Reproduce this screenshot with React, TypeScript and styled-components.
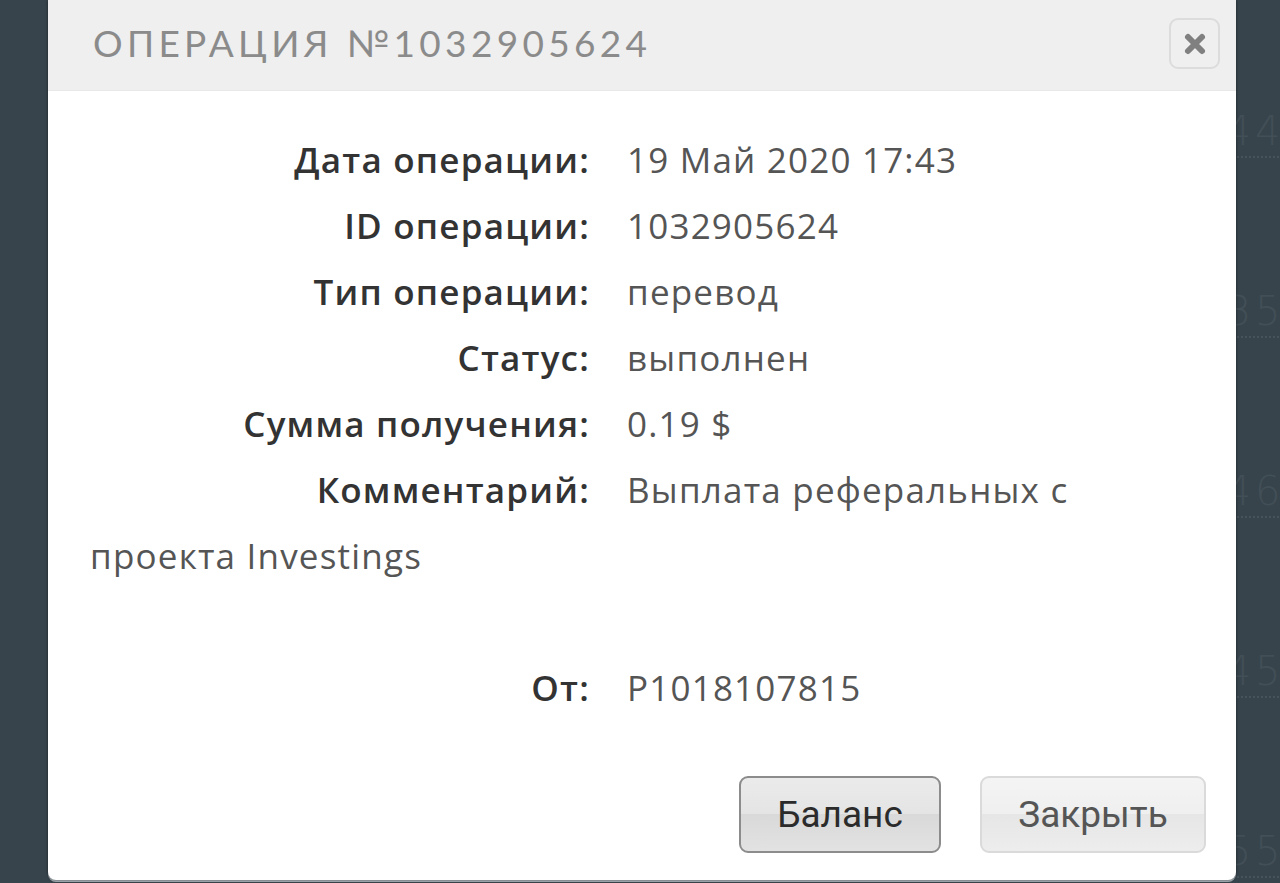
import styled, { createGlobalStyle } from "styled-components";

const GlobalStyle = createGlobalStyle`
  html, body {
    margin: 0;
    padding: 0;
    height: 100%;
    overflow: hidden;
    background: #37444c;
  }
`;

const backgroundNumbers = ["445", "358", "469", "459", "554"];

const details = [
  { label: "Дата операции:", value: "19 Май 2020 17:43" },
  { label: "ID операции:", value: "1032905624" },
  { label: "Тип операции:", value: "перевод" },
  { label: "Статус:", value: "выполнен" },
  { label: "Сумма получения:", value: "0.19 $" },
];

export default function App() {
  return (
    <Screen>
      <GlobalStyle />
      <Backdrop>
        {backgroundNumbers.map((n) => (
          <BgRow key={n}>
            <BgNumber>{n}</BgNumber>
          </BgRow>
        ))}
      </Backdrop>

      <Dialog>
        <Header>
          <Title>ОПЕРАЦИЯ №1032905624</Title>
          <CloseButton type="button" aria-label="close">
            <svg width="24" height="24" viewBox="0 0 24 24">
              <path
                d="M5 5 L19 19 M19 5 L5 19"
                stroke="#808080"
                strokeWidth="6"
                strokeLinecap="round"
                fill="none"
              />
            </svg>
          </CloseButton>
        </Header>

        <Body>
          <Details>
            {details.map((d) => (
              <Row key={d.label}>
                <Label>{d.label}</Label>
                <Value>{d.value}</Value>
              </Row>
            ))}
            <Row>
              <Label>Комментарий:</Label>
              <Value>
                Выплата реферальных с проекта Investings
                <br />
                <br />
              </Value>
            </Row>
            <Row>
              <Label>От:</Label>
              <Value>P1018107815</Value>
            </Row>
          </Details>

          <Footer>
            <Button type="button" $primary>
              Баланс
            </Button>
            <Button type="button">Закрыть</Button>
          </Footer>
        </Body>
      </Dialog>
    </Screen>
  );
}

const Screen = styled.div`
  position: relative;
  width: 1280px;
  height: 883px;
  overflow: hidden;
  background: #37444c;
`;

const Backdrop = styled.div`
  display: flex;
  flex-direction: column;
  padding-top: 108px;
`;

const BgRow = styled.div`
  height: 180px;
  display: flex;
  justify-content: flex-end;
  align-items: flex-start;
`;

const BgNumber = styled.span`
  font-family: "DejaVu Sans", sans-serif;
  font-size: 40px;
  font-weight: 300;
  color: #424f57;
  letter-spacing: 4px;
  margin-right: -34px;
  border-bottom: 2px dotted #46535b;
  padding-bottom: 2px;
`;

const Dialog = styled.div`
  position: absolute;
  left: 48px;
  top: 0;
  width: 1188px;
  height: 880px;
  background: #ffffff;
  border-radius: 0 0 8px 8px;
  box-shadow: 0 0 3px rgba(0, 0, 0, 0.55), 0 2px 0 #a7afb5;
  display: flex;
  flex-direction: column;
  overflow: hidden;
`;

const Header = styled.div`
  height: 91px;
  flex-shrink: 0;
  background: #efefef;
  border-bottom: 1px solid #e8e8e8;
  box-sizing: border-box;
  display: flex;
  align-items: center;
  justify-content: space-between;
  padding: 0 16px 0 45px;
`;

const Title = styled.h1`
  margin: -6px 0 0;
  font-family: "Lato", "Open Sans", sans-serif;
  font-size: 37px;
  font-weight: 400;
  letter-spacing: 4.3px;
  color: #8b8b8b;
  line-height: 1;
`;

const CloseButton = styled.button`
  width: 51px;
  height: 51px;
  margin-top: -3px;
  border: 2px solid #dcdcdc;
  border-radius: 9px;
  background: #efefef;
  display: flex;
  align-items: center;
  justify-content: center;
  padding: 0;
`;

const Body = styled.div`
  flex: 1;
  display: flex;
  flex-direction: column;
  padding: 36px 30px 27px 42px;
`;

const Details = styled.div`
  width: 1040px;
  font-family: "Open Sans", "Lato", sans-serif;
  font-size: 35px;
  letter-spacing: 1.2px;
  line-height: 66px;
`;

const Row = styled.div``;

const Label = styled.span`
  display: inline-block;
  width: 500px;
  margin-right: 37px;
  text-align: right;
  font-weight: 600;
  color: #333333;
`;

const Value = styled.span`
  color: #555555;
  font-weight: 400;
`;

const Footer = styled.div`
  margin-top: auto;
  display: flex;
  justify-content: flex-end;
  gap: 39px;
`;

const Button = styled.button<{ $primary?: boolean }>`
  height: 77px;
  min-width: ${(p) => (p.$primary ? "202px" : "226px")};
  border-radius: 9px;
  font-family: Roboto, "Liberation Sans", sans-serif;
  font-size: 37px;
  font-weight: 400;
  color: ${(p) => (p.$primary ? "#2b2b2b" : "#555555")};
  border: 2px solid ${(p) => (p.$primary ? "#8c8c8c" : "#dadada")};
  background: ${(p) =>
    p.$primary
      ? "linear-gradient(#ebebeb, #e4e4e4 50%, #d9d9d9 50%, #e2e2e2)"
      : "linear-gradient(#f4f4f4, #efefef 50%, #e6e6e6 50%, #ededed)"};
  padding: 0 30px;
`;
